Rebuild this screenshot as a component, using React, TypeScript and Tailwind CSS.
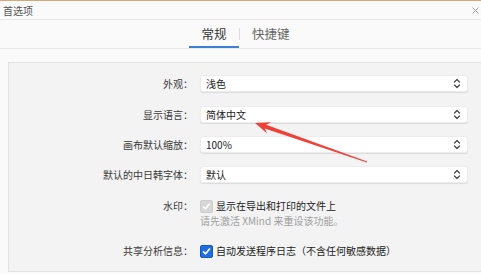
import React from "react";

const Chevron = () => (
  <svg width="8" height="11" viewBox="0 0 8 11" fill="none" stroke="#444" strokeWidth="1.2" strokeLinecap="round" strokeLinejoin="round">
    <path d="M1.5 4 L4 1.5 L6.5 4" />
    <path d="M1.5 7 L4 9.5 L6.5 7" />
  </svg>
);

const Check = () => (
  <svg width="9" height="9" viewBox="0 0 9 9" fill="none" stroke="#fff" strokeWidth="1.6" strokeLinecap="round" strokeLinejoin="round">
    <path d="M1.5 4.8 L3.6 6.8 L7.5 2" />
  </svg>
);

function SelectRow({ label, value, className }: { label: string; value: string; className: string }) {
  return (
    <div className={"flex items-center h-[17px] " + className}>
      <div className="w-[184px] text-right text-[10px] text-[#3a3a3a] leading-none">{label}：</div>
      <div className="ml-[7px] w-[268px] h-[17px] bg-white rounded-[3px] border border-[#ececec] shadow-[0_1px_1px_rgba(0,0,0,0.10)] flex items-center pl-[5px] pr-[6px]">
        <span className="text-[10px] text-[#222] leading-none">{value}</span>
        <span className="ml-auto flex items-center">
          <Chevron />
        </span>
      </div>
    </div>
  );
}

export default function App() {
  return (
    <div className="w-[481px] h-[274px] bg-[#fafafa] relative overflow-hidden font-['Noto_Sans_CJK_SC',sans-serif]">
      {/* title bar */}
      <div className="h-[20px] border-t border-t-[#d9a877] border-b border-b-[#e8e8e8] flex items-center pl-[3px] pr-[2px]">
        <span className="text-[10px] text-[#555] leading-none pt-[1px]">首选项</span>
        <span className="ml-auto flex items-center">
          <svg width="7" height="7" viewBox="0 0 7 7" stroke="#a0a0a0" strokeWidth="1">
            <path d="M0.5 0.5 L6.5 6.5 M6.5 0.5 L0.5 6.5" />
          </svg>
        </span>
      </div>
      {/* tabs */}
      <div className="h-[29px] border-b border-[#e8e8e8] flex items-center pl-[189px]">
        <div className="h-[28px] w-[50px] flex items-center justify-center border-b-2 border-[#3b7fd8] text-[12.5px] text-[#333] leading-none">
          <span className="pt-[2px]">常规</span>
        </div>
        <div className="w-px h-[12px] bg-[#dcdcdc]" />
        <div className="h-[28px] px-[12px] flex items-center text-[12.5px] text-[#666] leading-none">
          <span className="pt-[0px]">快捷键</span>
        </div>
      </div>
      {/* panel */}
      <div className="mt-[13px] ml-[8px] w-[490px] h-[210px] bg-[#f3f3f3] border border-[#e2e2e2] pt-[12px]">
        <SelectRow label="外观" value="浅色" className="" />
        <SelectRow label="显示语言" value="简体中文" className="mt-[14px]" />
        <SelectRow label="画布默认缩放" value="100%" className="mt-[13px]" />
        <SelectRow label="默认的中日韩字体" value="默认" className="mt-[13px]" />

        <div className="mt-[16px] flex items-center h-[14px]">
          <div className="w-[184px] text-right text-[10px] text-[#3a3a3a] leading-none">水印：</div>
          <div className="ml-[7px] flex items-center">
            <div className="w-[13px] h-[13px] rounded-[2px] bg-[#d6d6d6] border border-[#cdcdcd] flex items-center justify-center">
              <Check />
            </div>
            <span className="ml-[3px] text-[10px] text-[#222] leading-none">显示在导出和打印的文件上</span>
          </div>
        </div>
        <div className="mt-[1px] h-[14px] flex items-center pl-[191px]">
          <span className="text-[10px] text-[#a0a0a0] leading-none">请先激活 XMind 来重设该功能。</span>
        </div>

        <div className="mt-[16px] flex items-center h-[14px]">
          <div className="w-[184px] text-right text-[10px] text-[#3a3a3a] leading-none">共享分析信息：</div>
          <div className="ml-[7px] flex items-center">
            <div className="w-[13px] h-[13px] rounded-[2px] bg-[#1f6fe0] border border-[#1657b8] flex items-center justify-center">
              <Check />
            </div>
            <span className="ml-[3px] text-[10px] text-[#222] leading-none">自动发送程序日志（不含任何敏感数据）</span>
          </div>
        </div>
      </div>

      {/* red annotation arrow */}
      <svg className="absolute inset-0 pointer-events-none" width="481" height="274" viewBox="0 0 481 274">
        <polygon
          fill="#ef4137"
          points="255,123 271.1,122.3 266.1,124.7 367.1,161.6 366.9,162.4 264.7,128.5 267.2,133.6"
        />
      </svg>
    </div>
  );
}
